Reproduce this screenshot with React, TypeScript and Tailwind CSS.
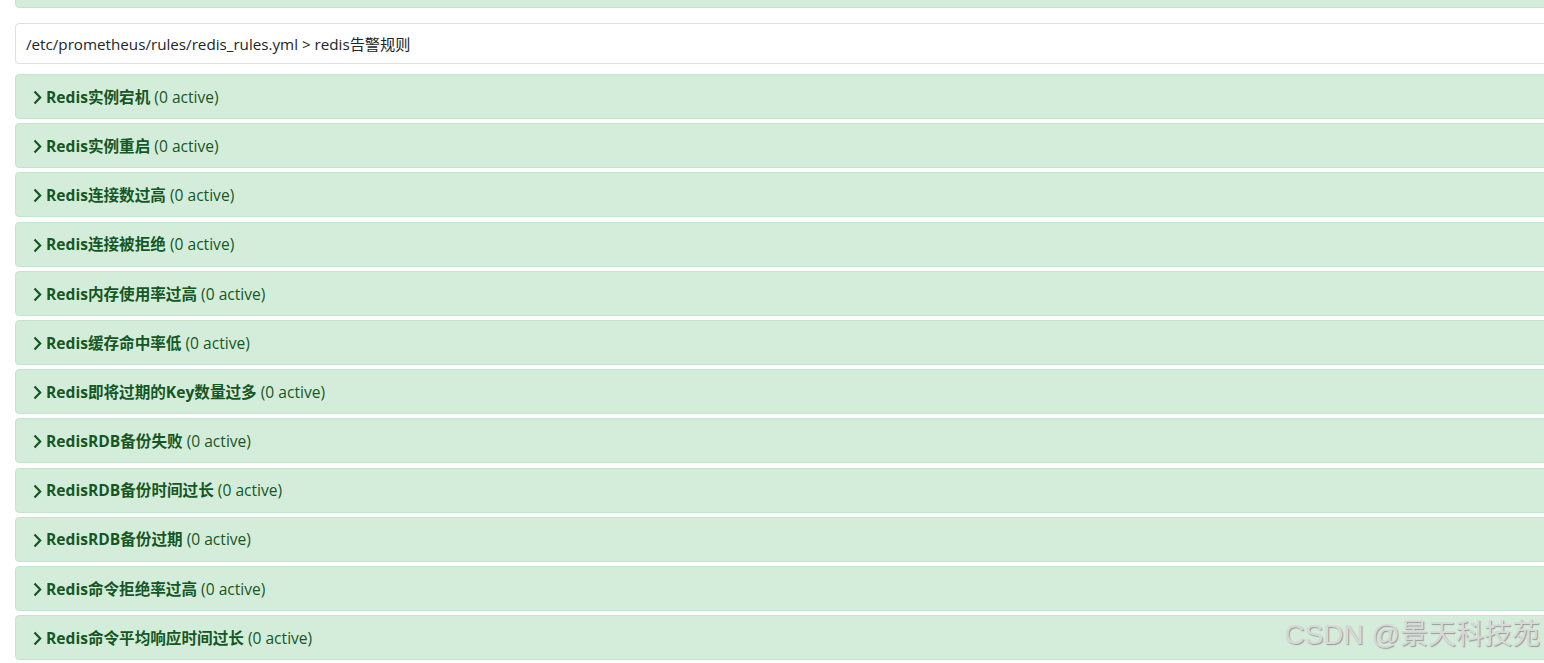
const rules = [
  "Redis实例宕机",
  "Redis实例重启",
  "Redis连接数过高",
  "Redis连接被拒绝",
  "Redis内存使用率过高",
  "Redis缓存命中率低",
  "Redis即将过期的Key数量过多",
  "RedisRDB备份失败",
  "RedisRDB备份时间过长",
  "RedisRDB备份过期",
  "Redis命令拒绝率过高",
  "Redis命令平均响应时间过长",
]

function Chevron() {
  return (
    <svg width="9" height="15" viewBox="0 0 9 15" className="shrink-0">
      <path d="M1.5 1.5 L7.2 7.5 L1.5 13.5" fill="none" stroke="#155724" strokeWidth="2.2" />
    </svg>
  )
}

export default function App() {
  return (
    <div
      className="relative h-[663px] w-[1544px] overflow-hidden bg-white pl-[15px]"
      style={{ fontFamily: '"Open Sans", "Noto Sans CJK SC", sans-serif' }}
    >
      <div className="mt-[-37px] h-[45px] w-[1560px] rounded border border-[#c3e6cb] bg-[#d4edda]"></div>

      <div className="mt-[15px] flex h-[41px] w-[1560px] items-center rounded border border-[#dfdfdf] bg-white pl-[10px] pt-[1px] text-[15.2px] text-[#212529]">
        /etc/prometheus/rules/redis_rules.yml &gt; redis告警规则
      </div>

      <div className="mt-[10px] flex flex-col gap-[4.2px]">
        {rules.map((r) => (
          <div
            key={r}
            className="flex h-[45px] w-[1560px] items-center gap-[4px] rounded border border-[#c3e6cb] bg-[#d4edda] pl-[17px] pt-[2px] text-[15.6px] text-[#155724]"
          >
            <Chevron />
            <span>
              <span className="font-bold">{r}</span> (0 active)
            </span>
          </div>
        ))}
      </div>

      <div
        className="absolute right-[4px] bottom-[7px] text-[28px] text-[#d8d8d8]"
        style={{ fontFamily: '"Liberation Sans", "Noto Sans CJK SC", sans-serif', textShadow: "1px 1px 1px #9a9a9a" }}
      >
        CSDN @景天科技苑
      </div>
    </div>
  )
}
